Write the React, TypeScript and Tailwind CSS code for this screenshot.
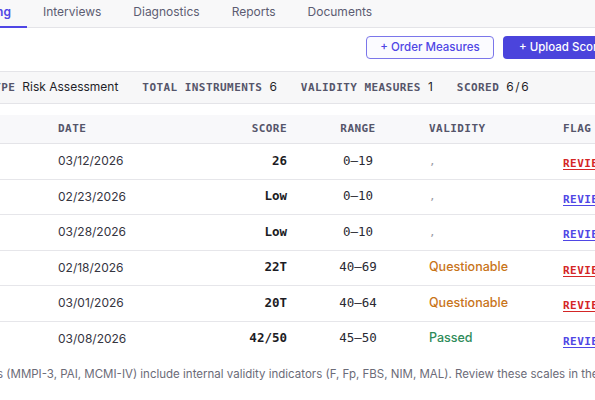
const sans = "font-['Inter','Liberation_Sans',sans-serif]";
const mono = "font-['DejaVu_Sans_Mono','Liberation_Mono',monospace]";

const tabs = [
  { label: 'Testing', active: true },
  { label: 'Interviews' },
  { label: 'Diagnostics' },
  { label: 'Reports' },
  { label: 'Documents' },
];

const stats = [
  { label: 'TYPE', value: 'Risk Assessment' },
  { label: 'TOTAL INSTRUMENTS', value: '6' },
  { label: 'VALIDITY MEASURES', value: '1' },
  { label: 'SCORED', value: '6/6' },
];

type Row = {
  date: string;
  score: string;
  range: string;
  validity?: 'Questionable' | 'Passed';
  urgent: boolean;
};

const rows: Row[] = [
  { date: '03/12/2026', score: '26', range: '0–19', urgent: true },
  { date: '02/23/2026', score: 'Low', range: '0–10', urgent: false },
  { date: '03/28/2026', score: 'Low', range: '0–10', urgent: false },
  { date: '02/18/2026', score: '22T', range: '40–69', validity: 'Questionable', urgent: true },
  { date: '03/01/2026', score: '20T', range: '40–64', validity: 'Questionable', urgent: true },
  { date: '03/08/2026', score: '42/50', range: '45–50', validity: 'Passed', urgent: false },
];

const grid = 'grid grid-cols-[158px_103px_110px_134px_1fr] pl-[42px]';
const label = `${mono} text-[11px] font-bold tracking-[0.04em] text-[#55556a]`;

const App = () => {
  return (
    <div className={`w-[595px] h-[400px] overflow-hidden bg-white ${sans}`}>
      {/* tab bar */}
      <div className="bg-[#f8f8f9] border-b border-[#e4e4e8] -mt-[7px]">
        <div className="flex -ml-[48px] whitespace-nowrap">
          {tabs.map((t) => (
            <div
              key={t.label}
              className={`px-4 pt-[9px] pb-[4px] text-[12px] leading-5 border-b-2 -mb-px ${
                t.active
                  ? 'font-semibold text-[#4f46e5] border-[#4f46e5]'
                  : 'text-[#5c5c72] border-transparent'
              }`}
            >
              {t.label}
            </div>
          ))}
        </div>
      </div>

      {/* actions */}
      <div className="flex gap-[9px] pl-[366px] pt-2 whitespace-nowrap">
        <button className="h-[23px] w-[128px] shrink-0 rounded-[4px] border border-[#7b76ea] bg-[#fbfbff] text-[11.5px] font-medium text-[#4f46e5]">
          + Order Measures
        </button>
        <button className="h-[23px] shrink-0 rounded-[4px] bg-[#4b44dc] px-4 text-[11.5px] font-medium text-white">
          + Upload Scores
        </button>
      </div>

      {/* summary strip */}
      <div className="mt-[12px] h-[33px] border-y border-[#e4e4e8] bg-[#f7f7f8] flex items-center">
        <div className="flex items-baseline gap-6 -ml-[13px] whitespace-nowrap">
          {stats.map((s) => (
            <div key={s.label} className="flex items-baseline gap-[7px]">
              <span className={label}>{s.label}</span>
              <span className={`text-[12px] text-[#1f1f29] ${s.label === 'SCORED' ? 'tracking-[0.14em]' : ''}`}>
                {s.value}
              </span>
            </div>
          ))}
        </div>
      </div>

      {/* table */}
      <div className="mt-[11px]">
        <div className={`${grid} h-[29px] items-center bg-[#f8f8fa] border-b border-[#e4e4e8] whitespace-nowrap`}>
          <div className={`px-4 ${label}`}>DATE</div>
          <div className={`px-4 text-right ${label}`}>SCORE</div>
          <div className={`px-4 text-center ${label}`}>RANGE</div>
          <div className={`px-4 ${label}`}>VALIDITY</div>
          <div className={`px-4 ${label}`}>FLAG</div>
        </div>
        {rows.map((r, i) => (
          <div
            key={i}
            className={`${grid} h-[34.5px] items-center whitespace-nowrap box-content ${
              i < rows.length - 1 ? 'border-b border-[#e6e6ea]' : ''
            }`}
          >
            <div className="px-4 text-[12px] text-[#35353f]">{r.date}</div>
            <div className={`px-4 text-right ${mono} text-[12.5px] font-bold text-[#1c1c24]`}>{r.score}</div>
            <div className={`px-4 text-center ${mono} text-[12.5px] text-[#2a2a33]`}>{r.range}</div>
            <div className="px-4 text-[12.5px] font-medium">
              {r.validity === 'Questionable' && <span className="text-[#c8741a]">Questionable</span>}
              {r.validity === 'Passed' && <span className="text-[#2e8b5a]">Passed</span>}
              {!r.validity && <span className={`${mono} text-[11px] text-[#9a9aa6]`}>,</span>}
            </div>
            <div className="px-4">
              <span
                className={`${mono} text-[11px] font-bold tracking-[0.04em] underline underline-offset-2 ${
                  r.urgent ? 'text-[#d42626]' : 'text-[#4f46e5]'
                }`}
              >
                REVIEW
              </span>
            </div>
          </div>
        ))}
      </div>

      {/* footnote */}
      <p className="mt-[10px] -ml-[3px] whitespace-nowrap text-[11.5px] leading-4 text-[#6b6b78]">
        s (MMPI-3, PAI, MCMI-IV) include internal validity indicators (F, Fp, FBS, NIM, MAL). Review these scales in the full report.
      </p>
    </div>
  );
};

export default App;
